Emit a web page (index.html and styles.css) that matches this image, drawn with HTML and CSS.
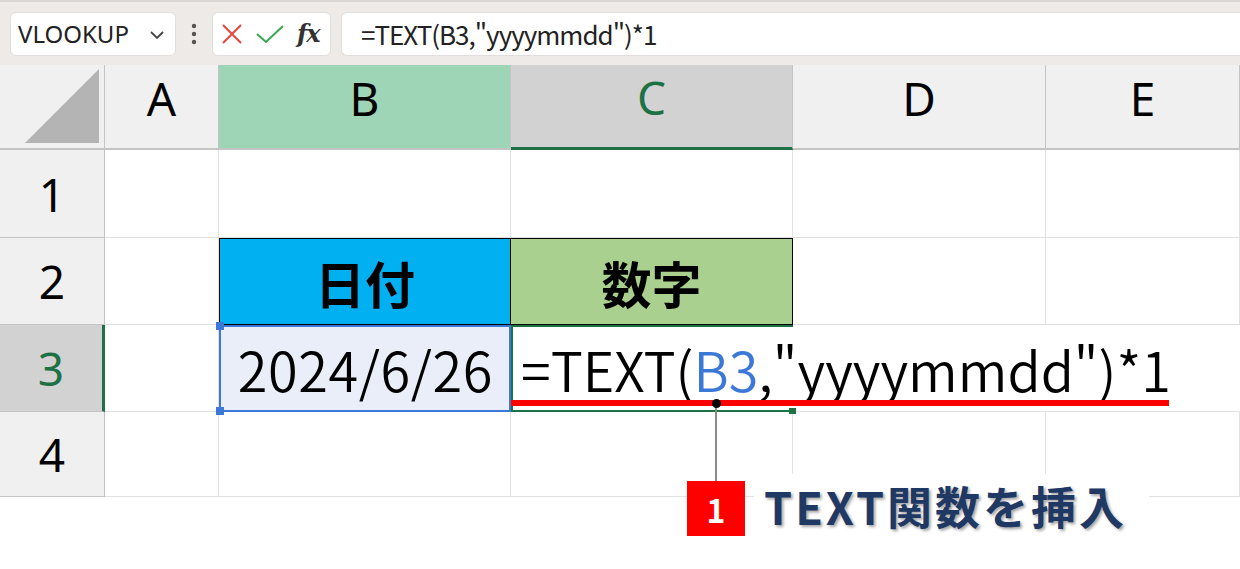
FILE: index.html
```html
<!DOCTYPE html>
<html lang="ja">
<head>
  <meta charset="UTF-8">
  <title>TEXT関数を挿入</title>
  <link rel="stylesheet" href="styles.css">
</head>
<body>
  <div class="toolbar">
    <div class="name-box">
      <span>VLOOKUP</span>
      <svg class="chevron" width="16" height="10" viewBox="0 0 16 10"><path d="M2 2 L8 8 L14 2" fill="none" stroke="#444" stroke-width="1.8"/></svg>
    </div>
    <svg class="grip" width="6" height="22" viewBox="0 0 6 22"><circle cx="3" cy="3" r="2.2" fill="#555"/><circle cx="3" cy="11" r="2.2" fill="#555"/><circle cx="3" cy="19" r="2.2" fill="#555"/></svg>
    <div class="fx-box">
      <svg width="22" height="22" viewBox="0 0 22 22"><path d="M2 2 L20 20 M20 2 L2 20" stroke="#e8453c" stroke-width="2"/></svg>
      <svg width="30" height="22" viewBox="0 0 30 22"><path d="M2 11 L11 19 L28 3" fill="none" stroke="#36a852" stroke-width="2"/></svg>
      <span class="fx">fx</span>
    </div>
    <div class="formula">=TEXT(B3,"yyyymmdd")*1</div>
  </div>

  <div class="sheet">
    <div class="hd corner"><svg width="78" height="78" viewBox="0 0 78 78"><path d="M76 2 L76 76 L2 76 Z" fill="#b4b4b4"/></svg></div>
    <div class="hd col">A</div>
    <div class="hd col col-sel">B</div>
    <div class="hd col col-act">C</div>
    <div class="hd col">D</div>
    <div class="hd col">E</div>

    <div class="hd row">1</div>
    <div class="cell"></div>
    <div class="cell"></div>
    <div class="cell"></div>
    <div class="cell"></div>
    <div class="cell"></div>

    <div class="hd row">2</div>
    <div class="cell"></div>
    <div class="cell title title-date">日付</div>
    <div class="cell title title-num">数字</div>
    <div class="cell"></div>
    <div class="cell"></div>

    <div class="hd row row-act">3</div>
    <div class="cell"></div>
    <div class="cell date">2024/6/26</div>
    <div class="cell active">=TEXT(<span class="ref">B3</span>,"yyyymmdd")*1</div>
    <div class="cell spill"></div>
    <div class="cell spill"></div>

    <div class="hd row">4</div>
    <div class="cell"></div>
    <div class="cell"></div>
    <div class="cell"></div>
    <div class="cell"></div>
    <div class="cell"></div>
  </div>

  <div class="underline"></div>
  <div class="leader"></div>
  <div class="dot"></div>
  <div class="callout">
    <span class="step">1</span>
    <span class="callout-text">TEXT関数を挿入</span>
  </div>
</body>
</html>
```

FILE: styles.css
```css
html, body {
  margin: 0;
  padding: 0;
  background: #ffffff;
}

body {
  width: 1240px;
  height: 569px;
  overflow: hidden;
  position: relative;
  font-family: "Noto Sans", "Noto Sans CJK JP", sans-serif;
  color: #000;
}

/* Formula bar */
.toolbar {
  height: 65px;
  box-sizing: border-box;
  background: #eeeae7;
  border-top: 2px solid #d9d5d2;
  display: flex;
  align-items: center;
  padding-left: 10px;
}

.name-box {
  width: 166px;
  height: 44px;
  box-sizing: border-box;
  background: #fff;
  border: 1px solid #e2dedb;
  border-radius: 6px;
  display: flex;
  align-items: center;
  justify-content: space-between;
  padding: 0 10px 0 7px;
  font-size: 24px;
  color: #222;
}

.chevron {
  margin-top: 2px;
}

.grip {
  margin: 0 15px 0 15px;
}

.fx-box {
  width: 119px;
  height: 44px;
  box-sizing: border-box;
  background: #fff;
  border: 1px solid #e2dedb;
  border-radius: 6px;
  display: flex;
  align-items: center;
  gap: 12px;
  padding-left: 8px;
}

.fx {
  font-family: "DejaVu Serif", serif;
  font-style: italic;
  font-weight: bold;
  font-size: 24px;
  color: #333;
  letter-spacing: -1px;
}

.formula {
  flex: 1;
  height: 44px;
  box-sizing: border-box;
  margin-left: 10px;
  background: #fff;
  border: 1px solid #e2dedb;
  border-right: none;
  border-radius: 6px 0 0 6px;
  display: flex;
  align-items: center;
  padding-left: 19px;
  font-family: "Noto Sans CJK JP", sans-serif;
  font-size: 26px;
  color: #222;
  letter-spacing: -1px;
}

/* Grid */
.sheet {
  display: grid;
  grid-template-columns: 105px 114px 292px 282px 253px 194px;
  grid-template-rows: 85px 88px 87px 87px 85px;
}

.hd {
  background: #f0f0f0;
  border-right: 1px solid #c4c4c4;
  border-bottom: 2px solid #c4c4c4;
  box-sizing: border-box;
  display: flex;
  align-items: center;
  justify-content: center;
  font-size: 46px;
}

.corner {
  justify-content: flex-end;
  align-items: flex-end;
  padding: 0 3px 3px 0;
}

.col {
  padding-bottom: 18px;
}

.row {
  border-bottom-width: 1px;
  padding-top: 0;
}

.col-sel {
  background: #9fd5b7;
}

.col-act {
  background: #d2d2d2;
  border-bottom: 3px solid #1e7145;
  color: #1e7145;
}

.row-act {
  background: #d2d2d2;
  border-right: 3px solid #1e7145;
  color: #1e7145;
}

.cell {
  border-right: 1px solid #e1e1e1;
  border-bottom: 1px solid #e1e1e1;
  box-sizing: border-box;
  display: flex;
  align-items: center;
  font-family: "Noto Sans CJK JP", sans-serif;
  font-weight: 350;
  font-size: 54px;
  white-space: nowrap;
}

.title {
  justify-content: center;
  font-weight: bold;
  font-size: 50px;
  border: 1px solid #000;
  border-left: none;
}

.title-date {
  background: #00b0f0;
  border-left: 1px solid #000;
}

.title-num {
  background: #a9d08e;
}

.date {
  justify-content: flex-end;
  padding-right: 16px;
  background: #e9eef8;
  border: 2px solid #3c78d8;
  letter-spacing: 0.6px;
  position: relative;
}

.date::before,
.date::after {
  content: "";
  position: absolute;
  left: -5px;
  width: 8px;
  height: 8px;
  background: #3c78d8;
}

.date::before {
  top: -5px;
}

.date::after {
  bottom: -5px;
}

.active {
  border: 2px solid #1e7145;
  border-right: none;
  padding-left: 8px;
  letter-spacing: 0;
  position: relative;
  z-index: 1;
}

.active::after {
  content: "";
  position: absolute;
  right: -3px;
  bottom: -4px;
  width: 7px;
  height: 6px;
  background: #1e7145;
}

.spill {
  border-right-color: transparent;
}

.ref {
  color: #3c78d8;
}

/* Annotation */
.underline {
  position: absolute;
  left: 511px;
  top: 400px;
  width: 658px;
  height: 6px;
  background: #ff0000;
  z-index: 2;
}

.leader {
  position: absolute;
  left: 715px;
  top: 403px;
  width: 2px;
  height: 78px;
  background: #8a8a8a;
  z-index: 2;
}

.dot {
  position: absolute;
  left: 712px;
  top: 399px;
  width: 9px;
  height: 9px;
  border-radius: 50%;
  background: #000;
  z-index: 3;
}

.callout {
  position: absolute;
  left: 687px;
  top: 474px;
  display: flex;
  align-items: flex-start;
  gap: 9px;
  z-index: 2;
}

.step {
  margin-top: 7px;
  width: 58px;
  height: 55px;
  background: #ff0000;
  color: #fff;
  font-family: "Noto Sans CJK JP", sans-serif;
  font-weight: bold;
  font-size: 32px;
  display: flex;
  align-items: center;
  justify-content: center;
}

.callout-text {
  background: #fff;
  width: 395px;
  height: 72px;
  box-sizing: border-box;
  padding: 0 0 0 10px;
  font-family: "Noto Sans CJK JP", sans-serif;
  font-weight: bold;
  font-size: 45px;
  line-height: 64px;
  color: #203864;
  letter-spacing: 3px;
  text-shadow: 2px 2px 3px rgba(0, 0, 0, 0.35);
}
```
